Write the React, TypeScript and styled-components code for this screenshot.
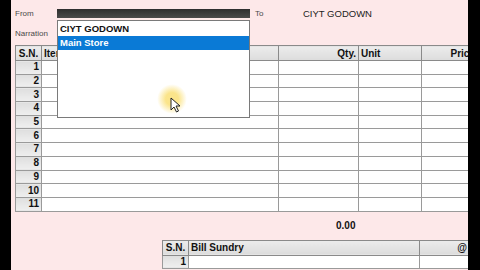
import styled, { createGlobalStyle } from 'styled-components';

const GlobalStyle = createGlobalStyle`
    html, body {
        margin: 0;
        padding: 0;
        width: 480px;
        height: 270px;
        overflow: hidden;
        background: #000;
    }
    * {
        box-sizing: border-box;
    }
`;

const itemRows = [1, 2, 3, 4, 5, 6, 7, 8, 9, 10, 11];

export default function App() {
    return (
        <>
            <GlobalStyle />
            <Screen>
                <Edge width={11} />
                <Voucher>
                    <FieldRow>
                        <Label>From</Label>
                        <DarkField />
                        <Label>To</Label>
                        <Value>CIYT GODOWN</Value>
                    </FieldRow>
                    <FieldRow>
                        <Label>Narration</Label>
                    </FieldRow>

                    <Grid>
                        <colgroup>
                            <col style={{ width: 26 }} />
                            <col style={{ width: 237 }} />
                            <col style={{ width: 80 }} />
                            <col style={{ width: 63 }} />
                            <col style={{ width: 56 }} />
                            <col style={{ width: 60 }} />
                        </colgroup>
                        <thead>
                            <tr>
                                <HeadCell align="center">S.N.</HeadCell>
                                <HeadCell>Item</HeadCell>
                                <HeadCell align="right">Qty.</HeadCell>
                                <HeadCell>Unit</HeadCell>
                                <HeadCell align="right">Price</HeadCell>
                                <HeadCell />
                            </tr>
                        </thead>
                        <tbody>
                            {itemRows.map(n => (
                                <tr key={n}>
                                    <NumCell>{n}</NumCell>
                                    <Cell />
                                    <Cell />
                                    <Cell />
                                    <Cell />
                                    <Cell />
                                </tr>
                            ))}
                        </tbody>
                    </Grid>

                    <Totals>
                        <Total>0.00</Total>
                    </Totals>

                    <SundryGrid>
                        <colgroup>
                            <col style={{ width: 26 }} />
                            <col style={{ width: 231 }} />
                            <col style={{ width: 50 }} />
                        </colgroup>
                        <thead>
                            <tr>
                                <HeadCell align="center">S.N.</HeadCell>
                                <HeadCell>Bill Sundry</HeadCell>
                                <HeadCell align="right">@</HeadCell>
                            </tr>
                        </thead>
                        <tbody>
                            <tr>
                                <NumCell>1</NumCell>
                                <Cell />
                                <Cell />
                            </tr>
                        </tbody>
                    </SundryGrid>

                    <DropList>
                        <DropItem>CIYT GODOWN</DropItem>
                        <DropItem selected>Main Store</DropItem>
                    </DropList>

                    <Pointer>
                        <svg width="12" height="16" viewBox="0 0 12 16">
                            <path
                                d="M1 1 L1 13 L4 10 L6.5 15 L8.5 14 L6 9 L10 9 Z"
                                fill="#fff"
                                stroke="#222"
                                strokeWidth="1"
                                strokeLinejoin="round"
                            />
                        </svg>
                    </Pointer>
                </Voucher>
                <Edge width={12} />
            </Screen>
        </>
    );
}

const Screen = styled.div`
    display: flex;
    width: 480px;
    height: 270px;
`;

const Edge = styled.div<{ width: number }>`
    flex: 0 0 ${p => p.width}px;
    background: #000;
`;

const Voucher = styled.div`
    position: relative;
    flex: 1;
    overflow: hidden;
    background: #fde8e9;
    padding: 8px 0 0 4px;
    font-family: 'Liberation Sans', Arial, sans-serif;
`;

const FieldRow = styled.div`
    display: flex;
    align-items: center;
    height: 11px;
    margin-bottom: 9px;
`;

const Label = styled.span`
    width: 42px;
    font-size: 8px;
    color: #4a4a4a;
    &:nth-of-type(2) {
        width: 53px;
        padding-left: 5px;
    }
`;

const DarkField = styled.div`
    width: 193px;
    height: 9px;
    background: linear-gradient(#2e2e2e, #4a4a4a);
`;

const Value = styled.span`
    font-size: 9.5px;
    color: #222;
`;

const Grid = styled.table`
    table-layout: fixed;
    border-collapse: collapse;
    width: 522px;
    margin-top: -3px;
    border-top: 1px solid #999;
`;

const HeadCell = styled.th<{ align?: 'left' | 'right' | 'center' }>`
    height: 15px;
    padding: 0 2px;
    font-size: 10px;
    font-weight: bold;
    color: #111;
    text-align: ${p => p.align ?? 'left'};
    white-space: nowrap;
    overflow: hidden;
    background: linear-gradient(#ececec, #dcdcdc);
    border: 1px solid #8a8a8a;
    border-left-color: #333;
    &:first-child {
        border-left-color: #8a8a8a;
    }
`;

const Cell = styled.td`
    height: 13.7px;
    padding: 0;
    background: #fff;
    border: 1px solid #9a9a9a;
    border-left-color: #444;
`;

const NumCell = styled.td`
    height: 13.7px;
    padding: 0 2px 0 0;
    font-size: 10px;
    line-height: 12px;
    font-weight: bold;
    color: #111;
    text-align: right;
    background: linear-gradient(#dedede, #efefef);
    border: 1px solid #9a9a9a;
`;

const Totals = styled.div`
    display: flex;
    height: 28px;
    align-items: center;
    padding-left: 321px;
`;

const Total = styled.span`
    font-size: 10px;
    font-weight: bold;
    color: #111;
`;

const SundryGrid = styled(Grid)`
    width: 307px;
    margin-top: 0;
    margin-left: 147px;
`;

const DropList = styled.div`
    position: absolute;
    left: 46px;
    top: 20px;
    width: 193px;
    height: 98px;
    background: #fff;
    border: 1px solid #7a7a7a;
    padding-top: 1px;
`;

const DropItem = styled.div<{ selected?: boolean }>`
    height: 14px;
    line-height: 14px;
    padding-left: 2px;
    font-size: 9.5px;
    font-weight: bold;
    color: ${p => (p.selected ? '#fff' : '#111')};
    background: ${p => (p.selected ? '#0a7ad6' : 'transparent')};
`;

const Pointer = styled.div`
    position: absolute;
    left: 146px;
    top: 84px;
    width: 30px;
    height: 30px;
    border-radius: 50%;
    background: radial-gradient(circle, rgba(250, 222, 110, 0.8) 30%, rgba(250, 232, 160, 0) 70%);
    svg {
        position: absolute;
        left: 13px;
        top: 13px;
    }
`;
